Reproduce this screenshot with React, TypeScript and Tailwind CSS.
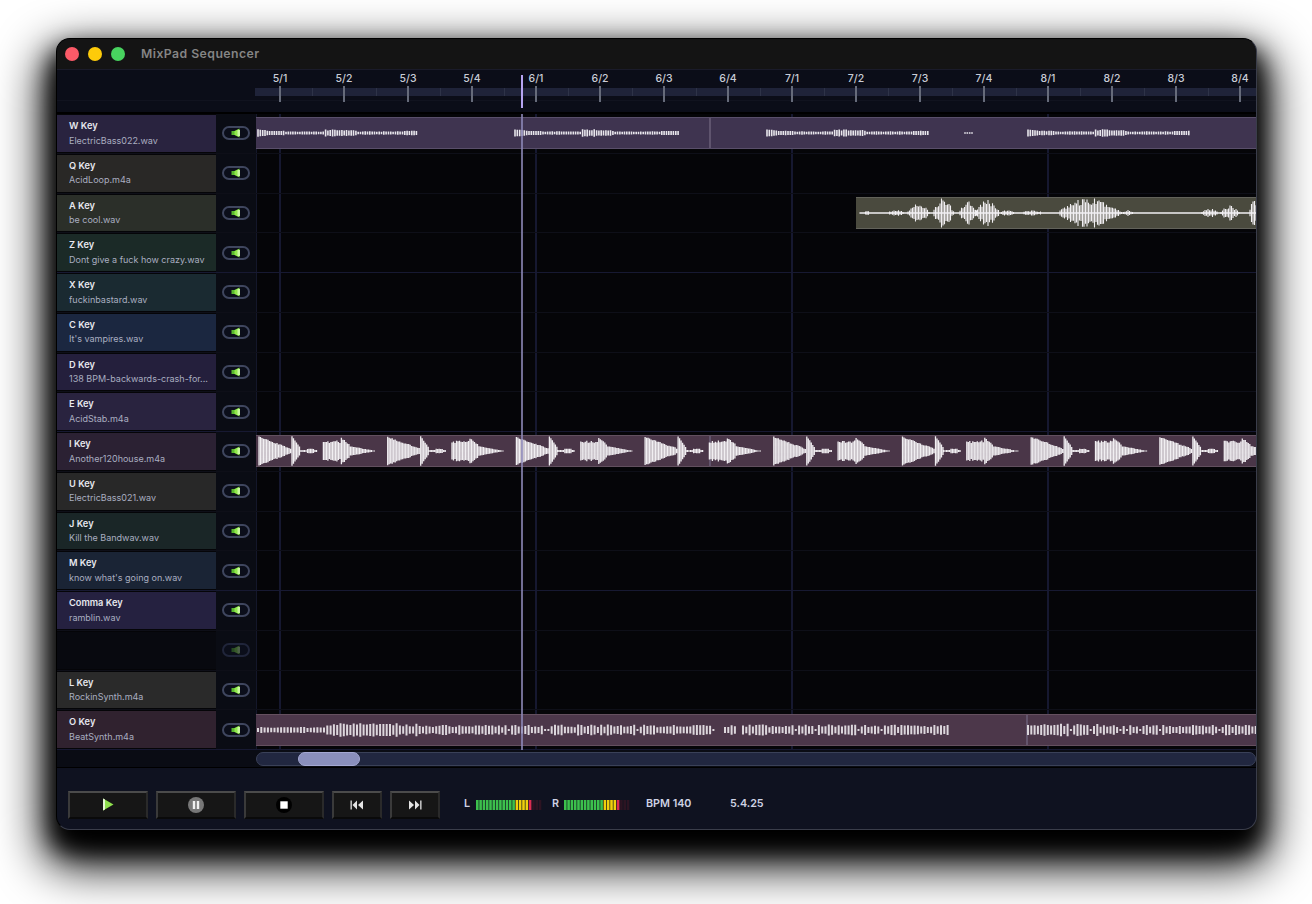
const FONT = "font-['Inter','Liberation_Sans',sans-serif]";

interface Track {
  name: string;
  file: string;
  bg: string;
}

const tracks: Track[] = [
  { name: 'W Key', file: 'ElectricBass022.wav', bg: 'bg-[#29233f]' },
  { name: 'Q Key', file: 'AcidLoop.m4a', bg: 'bg-[#292826]' },
  { name: 'A Key', file: 'be cool.wav', bg: 'bg-[#2b2f29]' },
  { name: 'Z Key', file: 'Dont give a fuck how crazy.wav', bg: 'bg-[#1b2a27]' },
  { name: 'X Key', file: 'fuckinbastard.wav', bg: 'bg-[#1a2a31]' },
  { name: 'C Key', file: "It's vampires.wav", bg: 'bg-[#1b2740]' },
  { name: 'D Key', file: '138 BPM-backwards-crash-for...', bg: 'bg-[#241f3c]' },
  { name: 'E Key', file: 'AcidStab.m4a', bg: 'bg-[#29233f]' },
  { name: 'I Key', file: 'Another120house.m4a', bg: 'bg-[#2b2133]' },
  { name: 'U Key', file: 'ElectricBass021.wav', bg: 'bg-[#282828]' },
  { name: 'J Key', file: 'Kill the Bandwav.wav', bg: 'bg-[#1a2627]' },
  { name: 'M Key', file: "know what's going on.wav", bg: 'bg-[#1a2435]' },
  { name: 'Comma Key', file: 'ramblin.wav', bg: 'bg-[#252140]' },
  { name: '', file: '', bg: '' },
  { name: 'L Key', file: 'RockinSynth.m4a', bg: 'bg-[#2a2a2a]' },
  { name: 'O Key', file: 'BeatSynth.m4a', bg: 'bg-[#30222f]' },
];

const rulerLabels = ['5/1', '5/2', '5/3', '5/4', '6/1', '6/2', '6/3', '6/4', '7/1', '7/2', '7/3', '7/4', '8/1', '8/2', '8/3', '8/4'];

// small seeded random so the wave forms stay the same between runs
function makeRand(seed: number) {
  let s = seed;
  return () => {
    s = (s * 16807) % 2147483647;
    return s / 2147483647;
  };
}

// x values are page coordinates, y centre of a clip is 16
function bars(from: number, to: number, step: number, amp: (x: number, r: number) => number, rand: () => number) {
  let d = '';
  for (let x = from; x < to; x += step) {
    const h = Math.max(0.6, amp(x, rand()));
    d += `M${x.toFixed(1)} ${(16 - h).toFixed(1)}V${(16 + h).toFixed(1)}`;
  }
  return d;
}

function bassPath() {
  const r = makeRand(11);
  const amp = (start: number) => (x: number, n: number) => {
    const t = x - start;
    if (t < 10) return 3.8 - t * 0.12 - n * 0.4;
    if (t > 66 && t < 80) return 2.6 + n * 1.1;
    return 1.2 + n * 0.5 + (Math.sin(t / 11) > 0.6 ? 0.6 : 0) + (t > 80 && t < 100 ? 0.6 : 0);
  };
  return (
    bars(258, 418, 2.33, amp(258), r) +
    bars(515, 680, 2.33, amp(515), r) +
    bars(767, 928, 2.33, amp(767), r) +
    bars(965, 974, 2.33, () => 0.8, r) +
    bars(1028, 1190, 2.33, amp(1028), r)
  );
}

function housePath() {
  const r = makeRand(23);
  let d = '';
  for (let i = 0; i < 16; i++) {
    const s = 259 + i * 64.35;
    if (i % 2 === 0) {
      d += bars(s, s + 32, 1.5, (x, n) => 14.5 - (x - s) * 0.36 - n * 1.2, r);
      d += bars(s + 33, s + 41, 1.5, (x, n) => 15 - (x - s - 33) * 1.4 - n * 0.6, r);
      d += bars(s + 41, s + 59, 1.5, (x, n) => (x > s + 47 && x < s + 55 ? 2 : 0.8) + n * 0.3, r);
    } else {
      d += bars(s, s + 20, 1.5, (_x, n) => 10.5 - n * 2.4, r);
      d += bars(s + 18, s + 27, 1.5, (x, n) => 13.5 - (x - s - 18) * 0.8 - n * 1.2, r);
      d += bars(s + 27, s + 52, 1.5, (x, n) => 5 - (x - s - 27) * 0.19 - n * 0.5, r);
    }
  }
  return d;
}

function coolPath() {
  const r = makeRand(37);
  const lobes = [
    [864, 871, 2],
    [888, 905, 3.5],
    [908, 930, 10],
    [934, 954, 15],
    [960, 978, 13],
    [976, 1000, 14],
    [1000, 1016, 3],
    [1021, 1045, 2.5],
    [1060, 1122, 15],
    [1122, 1135, 3],
    [1202, 1219, 5],
    [1221, 1240, 8],
    [1250, 1258, 13],
  ];
  let d = 'M860 15.7H1256V16.3H860Z';
  lobes.forEach(([a, b, top]) => {
    d += bars(a, b, 1.5, (x, n) => {
      const t = (x - a) / (b - a);
      return top * Math.sin(Math.PI * Math.min(1, t * 0.9 + 0.08)) * (0.5 + n * 0.5);
    }, r);
  });
  return d;
}

function beatPath() {
  const r = makeRand(51);
  const amp = (x: number, n: number) => {
    if (n > 0.93) return 1.1;
    if (x < 325) return 2 + n * 1.2;
    if (x < 398) return 4.5 + n * 2.6;
    if (x < 430) return 3 + n * 3.5;
    return 2.8 + n * 2.8;
  };
  return (
    bars(258, 716, 3.3, amp, r) +
    bars(725, 735, 3.3, amp, r) +
    bars(743, 948, 3.3, amp, r) +
    bars(1028, 1256, 3.3, (x, n) => (n > 0.93 ? 1.1 : x < 1100 ? 4 + n * 2.6 : 2.8 + n * 2.6), r)
  );
}

function Clip({ path, bar, fill, edge, divider, offset = 0, tone = '#f1eff2' }: { path: string; bar: number; fill: string; edge: string; divider?: number; offset?: number; tone?: string }) {
  return (
    <div className={`relative z-10 h-[32px] flex-1 border-y ${fill} ${edge}`} style={offset ? { marginLeft: offset } : undefined}>
      <svg className="block h-full w-full" viewBox={`${256 + offset} 1 ${1000 - offset} 30`} preserveAspectRatio="none">
        {divider && <path d={`M${divider} 0V32`} stroke="#6b5f78" strokeWidth="1.5" />}
        <path d={path} stroke={tone} strokeWidth={bar} fill="none" />
      </svg>
    </div>
  );
}

function MuteButton({ dim }: { dim?: boolean }) {
  return (
    <div className={`flex h-[14px] w-[28px] items-center justify-center rounded-[7px] border-2 bg-[#0b0e1a] ${dim ? 'border-[#20253a]' : 'border-[#3f465e]'}`}>
      <svg width="10" height="10" viewBox="0 0 10 10" className={dim ? 'opacity-35' : ''}>
        <rect x="0.5" y="3" width="4" height="4" fill="#58b82e" />
        <path d="M3.5 3L8.5 0.5V9.5L3.5 7Z" fill="#8fe84a" />
        <path d="M6.5 2V8H9V2Z" fill="#c8f8a0" />
      </svg>
    </div>
  );
}

function Meter() {
  const segs = [];
  for (let i = 0; i < 20; i++) {
    let c = '#3cc04c';
    if (i >= 12) c = '#f0d00c';
    if (i === 16) c = '#dc2c50';
    if (i > 16) c = '#2c1422';
    segs.push(<rect key={i} x={i * 3.3} y="0" width="2.6" height="10" fill={c} />);
  }
  return (
    <svg width="66" height="10" viewBox="0 0 66 10" className="block shrink-0">
      {segs}
    </svg>
  );
}

function TransportButton({ w, children }: { w: string; children: React.ReactNode }) {
  return (
    <button className={`flex h-[28px] ${w} items-center justify-center border-2 border-t-[#4b4b4b] border-r-[#2a2a2a] border-b-[#0a0a0a] border-l-[#3a3a3a] bg-[#161616]`}>
      {children}
    </button>
  );
}

export default function App() {
  return (
    <div className={`min-h-[904px] overflow-hidden bg-white pt-[38px] pl-[56px] ${FONT}`}>
      <div className="flex h-[792px] w-[1201px] flex-col overflow-hidden rounded-[14px] border border-black border-b-[#3a3d4a] border-r-[#3a3d4a] bg-[#0f1220] shadow-[0_24px_48px_12px_#000000,0_16px_24px_4px_#000000]">
        {/* Title bar */}
        <div className="flex h-[31px] shrink-0 items-center gap-[9px] border-b border-[#1a1b2a] bg-[#141414] pl-[8px]">
          <span className="h-[14px] w-[14px] rounded-full bg-[#fb5a68]" />
          <span className="h-[14px] w-[14px] rounded-full bg-[#fdcb0a]" />
          <span className="h-[14px] w-[14px] rounded-full bg-[#48d35f]" />
          <span className="ml-[7px] pt-[1px] text-[12.25px] font-semibold tracking-[0.45px] text-[#858585]">MixPad Sequencer</span>
        </div>

        {/* Ruler */}
        <div className="relative flex h-[44px] shrink-0 overflow-hidden border-b-2 border-black bg-[#0b0d18] pl-[191px]">
          <div className="absolute top-[18px] right-0 left-[198px] h-[8px] bg-[#1f2339]" />
          <div className="absolute top-[30px] right-0 left-0 h-[1px] bg-[#11131f]" />
          {rulerLabels.map((label) => (
            <div key={label} className="relative flex w-[64px] shrink-0 flex-col items-center pt-[2px]">
              <span className="text-[10.5px] leading-[13px] font-medium text-[#c9ccd6]">{label}</span>
              <div className="relative mt-[1px] h-[16px] w-[1.5px] bg-[#666b7a]" />
              <div className="absolute top-[18px] right-[-0.5px] h-[8px] w-[1px] bg-[#2e3348]" />
            </div>
          ))}
          <div className="absolute top-[5px] left-[464px] z-20 h-[33px] w-[2px] bg-[#b6a4f2]" />
        </div>

        {/* Tracks */}
        <div className="relative grid h-[636px] shrink-0 grid-rows-[repeat(16,minmax(0,1fr))] bg-[#050508]">
          <div className="absolute top-0 bottom-0 left-[222px] w-[2px] bg-[#161830]" />
          <div className="absolute top-0 bottom-0 left-[478px] w-[2px] bg-[#161830]" />
          <div className="absolute top-0 bottom-0 left-[734px] w-[2px] bg-[#161830]" />
          <div className="absolute top-0 bottom-0 left-[990px] w-[2px] bg-[#161830]" />
          <div className="absolute top-0 bottom-0 left-[199px] w-[1px] bg-[#14172a]" />
          <div className="absolute top-0 bottom-0 left-[464px] z-20 w-[2px] bg-[#8d88b8]/80" />
          {tracks.map((t, i) => (
            <div key={i} className={`relative flex min-h-0 border-b ${(i + 1) % 4 === 0 ? 'border-[#171932]' : 'border-[#0e0f18]'}`}>
              <div className={`my-[1px] flex w-[159px] shrink-0 flex-col justify-center pl-[12px] ${t.bg || 'bg-[#08090f]'}`}>
                {t.name && <div className="text-[9.25px] leading-[14px] font-semibold text-[#e6e7ee]">{t.name}</div>}
                {t.file && <div className="mt-[0.5px] truncate text-[9px] leading-[14px] text-[#a9aec0]">{t.file}</div>}
              </div>
              <div className="flex w-[40px] shrink-0 items-center justify-center bg-[#0a0c14]">
                <MuteButton dim={i === 13} />
              </div>
              <div className="flex min-w-0 flex-1 items-center">
                {i === 0 && <Clip path={bassPath()} bar={1.6} fill="bg-[#3f3450]" edge="border-[#594f6a]" divider={710} tone="#e8e6ec" />}
                {i === 2 && <Clip path={coolPath()} bar={1.1} fill="bg-[#4a4a3e]" edge="border-[#62625a]" offset={600} />}
                {i === 8 && <Clip path={housePath()} bar={1.3} fill="bg-[#4a3648]" edge="border-[#62505f]" divider={710} />}
                {i === 15 && <Clip path={beatPath()} bar={2} fill="bg-[#4c374a]" edge="border-[#65505f]" divider={1027} tone="#dcd6dc" />}
              </div>
            </div>
          ))}
        </div>

        {/* Scrollbar */}
        <div className="flex h-[18px] shrink-0 items-center border-b border-black bg-[#0a0c14] pl-[199px]">
          <div className="flex h-[14px] flex-1 items-center rounded-full border-[1.5px] border-[#3a4158] bg-[#212740] pl-[41px]">
            <div className="h-[14px] w-[62px] rounded-full border-[1.5px] border-[#a4a8d2] bg-[#8a8fbc]" />
          </div>
        </div>

        {/* Transport */}
        <div className="flex flex-1 items-center pt-[12px] pl-[11px] text-[10.75px] font-semibold text-[#ced2e4]">
          <div className="flex gap-[8px]">
            <TransportButton w="w-[80px]">
              <svg width="12" height="13" viewBox="0 0 12 13">
                <path d="M1 0.5L11.5 6.5L1 12.5Z" fill="#8fe04e" />
                <path d="M1 0.5L3 1.6V11.4L1 12.5Z" fill="#e4f7d4" />
              </svg>
            </TransportButton>
            <TransportButton w="w-[80px]">
              <svg width="16" height="16" viewBox="0 0 16 16">
                <circle cx="8" cy="8" r="8" fill="#777777" />
                <rect x="4.8" y="4" width="2.4" height="8" fill="#f0f0f0" />
                <rect x="8.8" y="4" width="2.4" height="8" fill="#f0f0f0" />
              </svg>
            </TransportButton>
            <TransportButton w="w-[80px]">
              <svg width="16" height="16" viewBox="0 0 16 16">
                <circle cx="8" cy="8" r="8" fill="#000000" />
                <rect x="4.3" y="4.3" width="7.4" height="7.4" fill="#ffffff" />
              </svg>
            </TransportButton>
            <TransportButton w="w-[50px]">
              <svg width="14" height="10" viewBox="0 0 14 10" fill="#e4e4e4">
                <rect x="0.5" y="0.5" width="1.3" height="9" />
                <path d="M7 0.5V9.5L2.5 5Z" />
                <path d="M13 0.5V9.5L8 5Z" />
              </svg>
            </TransportButton>
            <TransportButton w="w-[50px]">
              <svg width="14" height="10" viewBox="0 0 14 10" fill="#e4e4e4">
                <path d="M1 0.5V9.5L6 5Z" />
                <path d="M7 0.5V9.5L11.5 5Z" />
                <rect x="12.2" y="0.5" width="1.3" height="9" />
              </svg>
            </TransportButton>
          </div>
          <span className="ml-[24px] w-[12px]">L</span>
          <Meter />
          <span className="ml-[10px] w-[12px]">R</span>
          <Meter />
          <span className="ml-[16px] w-[84px]">BPM 140</span>
          <span>5.4.25</span>
        </div>
      </div>
    </div>
  );
}
